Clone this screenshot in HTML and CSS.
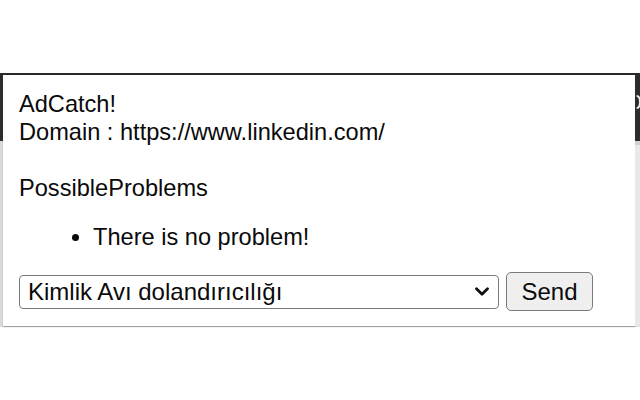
FILE: index.html
```html
<!DOCTYPE html>
<html lang="tr">
<head>
<meta charset="utf-8">
<title>AdCatch!</title>
<link rel="stylesheet" href="styles.css">
</head>
<body>
<div class="desk">
  <div class="edge edge-left"></div>
  <div class="popup">
    <p class="info">AdCatch!<br>Domain : https://www.linkedin.com/<br><br>PossibleProblems</p>
    <ul class="problems">
      <li>There is no problem!</li>
    </ul>
    <form class="report">
      <div class="select-wrap">
        <select class="kind">
          <option>Kimlik Avı dolandırıcılığı</option>
        </select>
        <svg class="chevron" viewBox="0 0 14 10" width="14" height="10" aria-hidden="true">
          <path d="M1.5 1.8 L7 7.3 L12.5 1.8" fill="none" stroke="#111" stroke-width="2.8" stroke-linecap="round" stroke-linejoin="round"/>
        </svg>
      </div>
      <button type="button" class="send">Send</button>
    </form>
  </div>
  <div class="edge edge-right">
    <svg class="peek" viewBox="0 0 5 20" width="5" height="20" aria-hidden="true">
      <path d="M1.6 3 C4 3 5 5 5 9 C5 13 4 15 1.6 15" fill="none" stroke="#eeeeee" stroke-width="2"/>
    </svg>
  </div>
</div>
</body>
</html>
```
FILE: styles.css
```css
html, body {
  margin: 0;
  padding: 0;
  background: #ffffff;
}

body {
  font-family: "Liberation Sans", Arial, sans-serif;
  color: #0a0a0a;
}

/* page behind the extension popup */
.desk {
  margin-top: 73px;
  height: 255px;
  display: flex;
  border-top: 2px solid #2a2a2a;
  background: linear-gradient(#2c2c2c 0 66px, #dedede 66px 252px, #ffffff 252px);
}

.edge {
  flex: none;
}

.edge-left {
  width: 3px;
  background: linear-gradient(#2c2c2c 0 66px, #d9d9d9 66px 251px, transparent 251px);
}

.edge-right {
  width: 5px;
  overflow: hidden;
  background: linear-gradient(#2c2c2c 0 66px, #d2d2d2 66px 70px, #e9e9e9 70px 251px, transparent 251px);
}

.peek {
  display: block;
  margin-top: 18px;
}

.popup {
  flex: none;
  width: 632px;
  height: 251px;
  box-sizing: border-box;
  background: #ffffff;
  padding: 15px 16px 0 16px;
  font-size: 23.6px;
  line-height: 28px;
  box-shadow: 0 1px 1px rgba(0, 0, 0, 0.25), 1px 0 1px rgba(0, 0, 0, 0.12);
}

.info {
  margin: 0;
}

.problems {
  margin: 21px 0 0 0;
  padding-left: 74px;
}

.report {
  margin-top: 21px;
  display: flex;
  align-items: center;
  gap: 7px;
}

.select-wrap {
  position: relative;
  width: 480px;
}

.kind {
  appearance: none;
  -webkit-appearance: none;
  width: 100%;
  height: 34px;
  box-sizing: border-box;
  border: 1px solid #7a7a7a;
  border-radius: 4px;
  background: #ffffff;
  color: #0a0a0a;
  font-family: "Liberation Sans", Arial, sans-serif;
  font-size: 24px;
  padding: 0 30px 0 8px;
  margin: 0;
}

.chevron {
  position: absolute;
  right: 10px;
  top: 12px;
  pointer-events: none;
}

.send {
  height: 39px;
  width: 87px;
  box-sizing: border-box;
  border: 1px solid #7a7a7a;
  border-radius: 5px;
  background: #efefef;
  color: #0a0a0a;
  font-family: "Liberation Sans", Arial, sans-serif;
  font-size: 24px;
  padding: 0;
  margin: 0;
}
```
